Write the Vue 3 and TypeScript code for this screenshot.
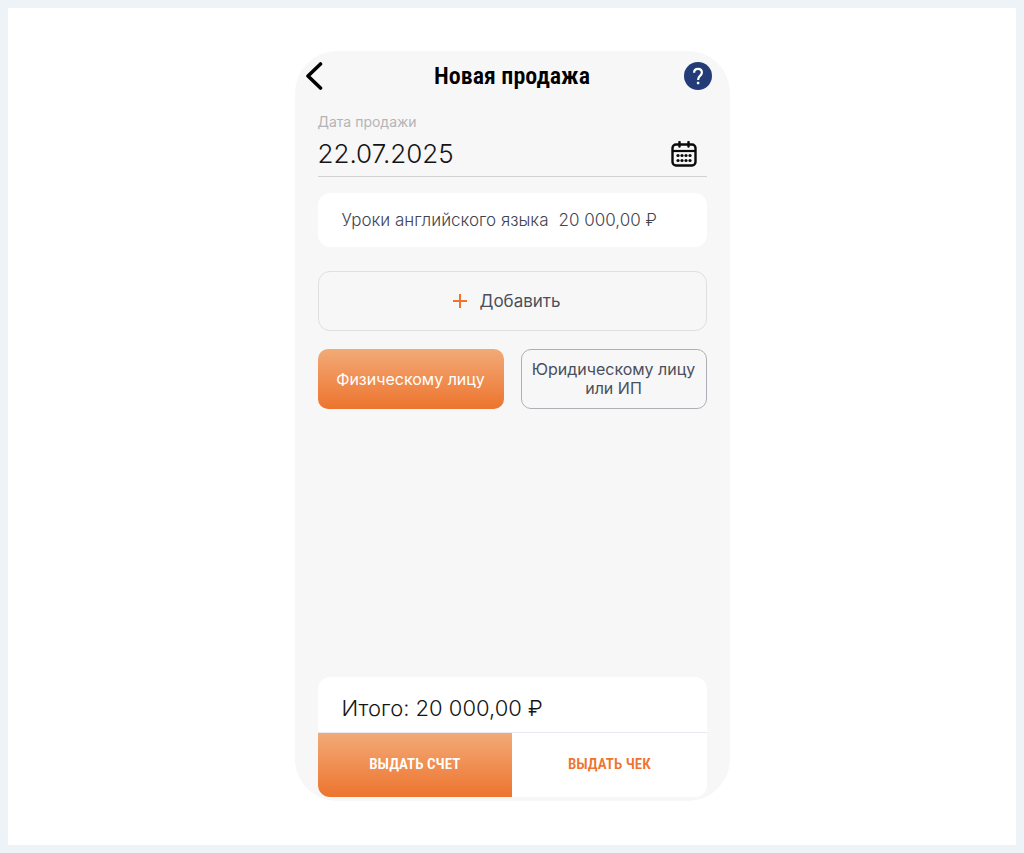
<script setup lang="ts">
import { ref } from 'vue'

type Buyer = 'person' | 'company'

const date = ref<string>('22.07.2025')
const buyer = ref<Buyer>('person')
const item = { name: 'Уроки английского языка', price: '20 000,00 ₽' }
const total = '20 000,00 ₽'
const buyers: { id: Buyer; label: string }[] = [
  { id: 'person', label: 'Физическому лицу' },
  { id: 'company', label: 'Юридическому лицу или ИП' },
]
const dots = [7, 11, 15, 19]
</script>

<template>
  <div class="page">
    <main class="phone">
      <header class="header">
        <button class="icon-button back" type="button" aria-label="Назад">
          <svg width="18" height="28" viewBox="0 0 18 28" fill="none">
            <path d="M15.500 2 3 14l12.500 12" stroke="#000" stroke-width="3.600" stroke-linecap="round" stroke-linejoin="round" />
          </svg>
        </button>
        <h1 class="title">Новая продажа</h1>
        <button class="icon-button help" type="button" aria-label="Справка">
          <svg width="28" height="28" viewBox="0 0 28 28" fill="none">
            <circle cx="14" cy="14" r="14" fill="#233c78" />
            <path d="M10.100 10.800C10.100 8.300 11.700 6.900 14 6.900s3.900 1.400 3.900 3.600c0 1.800-1 2.700-2.100 3.700-1.100.9-1.700 1.700-1.700 3.800" stroke="#fff" stroke-width="2.200" />
            <rect x="12.900" y="19.800" width="2.400" height="2.400" fill="#fff" />
          </svg>
        </button>
      </header>

      <div class="content">
        <div class="field">
          <label class="field-label" for="sale-date">Дата продажи</label>
          <div class="field-row">
            <input id="sale-date" v-model="date" class="date" type="text" />
            <button class="icon-button" type="button" aria-label="Выбрать дату">
              <svg width="26" height="26" viewBox="0 0 26 26" fill="none" stroke="#0b0b0b">
                <rect x="1.500" y="3.500" width="23" height="21" rx="3.500" stroke-width="2.400" />
                <path d="M1.500 10h23" stroke-width="2.200" />
                <path d="M8.500 1v4.500M17.500 1v4.500" stroke-width="2.400" stroke-linecap="round" />
                <g fill="#0b0b0b" stroke="none">
                  <template v-for="x in dots" :key="x">
                    <circle :cx="x" cy="14.500" r="1.600" />
                    <circle :cx="x" cy="19.500" r="1.600" />
                  </template>
                </g>
              </svg>
            </button>
          </div>
        </div>

        <div class="item">
          <span>{{ item.name }}</span>
          <span>{{ item.price }}</span>
        </div>

        <button class="add" type="button">
          <svg width="14" height="14" viewBox="0 0 14 14" stroke="#f0742e" stroke-width="2">
            <path d="M7 0v14M0 7h14" />
          </svg>
          <span>Добавить</span>
        </button>

        <div class="buyers">
          <button
            v-for="b in buyers"
            :key="b.id"
            type="button"
            class="buyer"
            :class="{ active: buyer === b.id }"
            :aria-pressed="buyer === b.id"
            @click="buyer = b.id"
          >
            {{ b.label }}
          </button>
        </div>

        <section class="summary">
          <p class="total">Итого: {{ total }}</p>
          <div class="actions">
            <button class="action primary" type="button">ВЫДАТЬ СЧЕТ</button>
            <button class="action" type="button">ВЫДАТЬ ЧЕК</button>
          </div>
        </section>
      </div>
    </main>
  </div>
</template>

<style>
body {
  margin: 0;
}
</style>

<style scoped>
.page {
  box-sizing: border-box;
  min-height: 100vh;
  display: flex;
  justify-content: center;
  padding: 43px 16px 44px;
  border: 8px solid #edf3f7;
  background: #fff;
  font-family: Inter, "Noto Sans", sans-serif;
}
button,
input {
  font-family: inherit;
  margin: 0;
  padding: 0;
  border: 0;
  background: none;
  color: inherit;
}
button {
  cursor: pointer;
}
svg {
  display: block;
}
.phone {
  box-sizing: border-box;
  width: 100%;
  max-width: 435px;
  display: flex;
  flex-direction: column;
  padding-bottom: 4px;
  border-radius: 42px;
  background: #f7f7f7;
}
.header {
  display: grid;
  grid-template-columns: 36px 1fr 28px;
  align-items: center;
  height: 50px;
  padding: 0 18px 0 10px;
}
.title {
  margin: 0;
  text-align: center;
  font-family: "Roboto Condensed", "Liberation Sans Narrow", "Liberation Sans", sans-serif;
  font-size: 24px;
  line-height: 28px;
  font-weight: 600;
  color: #000;
}
.content {
  flex: 1;
  display: flex;
  flex-direction: column;
  padding: 12px 23px 0;
}
.field {
  border-bottom: 1px solid #d2d2d4;
}
.field-label {
  display: block;
  font-size: 14px;
  line-height: 18px;
  color: #b4b4b6;
}
.field-row {
  display: flex;
  align-items: center;
  height: 45px;
  padding-right: 10px;
}
.date {
  flex: 1;
  min-width: 0;
  font-size: 26px;
  line-height: 36px;
  font-weight: 300;
  color: #141416;
}
.item {
  display: flex;
  gap: 10px;
  margin-top: 16px;
  padding: 15px 24px;
  border-radius: 12px;
  background: #fff;
  font-size: 17px;
  line-height: 24px;
  font-weight: 300;
  color: #3f4452;
}
.add {
  display: flex;
  align-items: center;
  justify-content: center;
  gap: 12px;
  height: 60px;
  margin-top: 24px;
  padding-right: 10px;
  border: 1px solid #dfdfe1;
  border-radius: 12px;
  font-size: 17px;
  color: #4a4f5c;
}
.buyers {
  display: grid;
  grid-template-columns: 1fr 1fr;
  gap: 17px;
  margin-top: 18px;
}
.buyer {
  height: 60px;
  padding: 0 8px;
  border: 1px solid #aeb0b6;
  border-radius: 10px;
  font-size: 16px;
  line-height: 19px;
  color: #4a4f5c;
}
.buyer.active {
  border: 0;
  background: linear-gradient(#f2aa77, #ed742e);
  color: #fff;
}
.summary {
  margin-top: auto;
  overflow: hidden;
  border-radius: 12px;
  background: #fff;
}
.total {
  margin: 0;
  padding: 15px 24px 8px;
  border-bottom: 1px solid #e6eaef;
  font-size: 22px;
  line-height: 32px;
  font-weight: 300;
  color: #141416;
}
.actions {
  display: grid;
  grid-template-columns: 1fr 1fr;
}
.action {
  height: 64px;
  padding-bottom: 2px;
  font-family: "Roboto Condensed", "Liberation Sans Narrow", "Liberation Sans", sans-serif;
  font-size: 15px;
  font-weight: 600;
  color: #ee7430;
}
.action.primary {
  background: linear-gradient(#f2aa77, #ed742e);
  color: #fff;
}
</style>
